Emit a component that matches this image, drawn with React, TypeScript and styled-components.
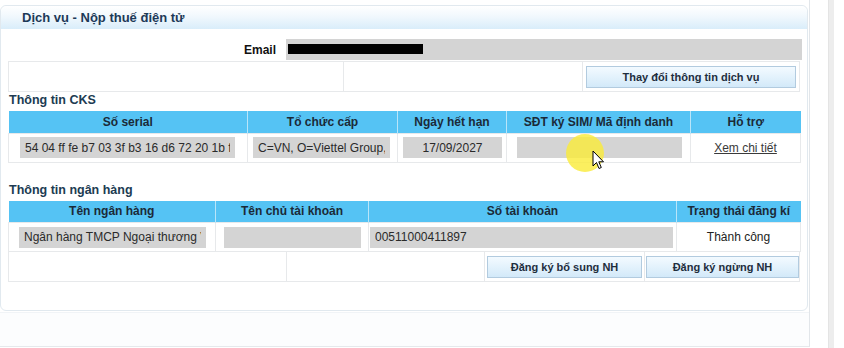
import React from 'react';
import styled, { createGlobalStyle } from 'styled-components';

const GlobalStyle = createGlobalStyle`
  html, body {
    margin: 0;
    padding: 0;
    background: #fff;
  }
  body {
    font-family: "Liberation Sans", Arial, sans-serif;
    color: #222;
  }
  * {
    box-sizing: border-box;
  }
`;

const Page = styled.div`
  display: flex;
  width: 844px;
  height: 348px;
  overflow: hidden;
  position: relative;
`;

const Main = styled.div`
  width: 810px;
  height: 347px;
  padding-top: 5px;
  border-right: 1px solid #e2e6ea;
  border-bottom: 1px solid #e6e9ec;
  display: flex;
  flex-direction: column;
`;

const Panel = styled.div`
  width: 808px;
  border: 1px solid #e1e9ef;
  border-radius: 6px;
  padding-bottom: 28px;
  background: #fff;
`;

const TitleBar = styled.div`
  height: 23px;
  padding-left: 21px;
  display: flex;
  align-items: center;
  border-radius: 6px 6px 0 0;
  background: linear-gradient(#ffffff 0%, #f1f8fd 45%, #d9edfa 100%);
  font-size: 13px;
  font-weight: bold;
  color: #1d3a58;
`;

const Content = styled.div`
  padding: 9px 7px 0 7px;
`;

const EmailRow = styled.div`
  display: flex;
  align-items: center;
  height: 23px;
  gap: 10px;
  margin-right: -2px;
`;

const FieldLabel = styled.div`
  width: 268px;
  text-align: right;
  font-size: 12px;
  font-weight: bold;
  color: #111;
`;

const GreyField = styled.input<{ $w?: number; $center?: boolean }>`
  display: block;
  width: ${(p) => (p.$w ? `${p.$w}px` : '100%')};
  height: 21px;
  padding: 0 5px;
  border: none;
  outline: none;
  background: #d4d4d4;
  font-family: "Liberation Sans", Arial, sans-serif;
  font-size: 12px;
  color: #2a2a2a;
  text-align: ${(p) => (p.$center ? 'center' : 'left')};
`;

const EmailField = styled.div`
  flex: 1;
  height: 21px;
  background: #d4d4d4;
  position: relative;
`;

const Redaction = styled.div`
  position: absolute;
  left: 2px;
  top: 5px;
  width: 135px;
  height: 10px;
  background: #000;
`;

const CellRow = styled.div<{ $cols: string; $h: number; $top?: boolean }>`
  display: grid;
  grid-template-columns: ${(p) => p.$cols};
  height: ${(p) => p.$h}px;
  border: 1px solid #e7e9eb;
  border-top: ${(p) => (p.$top ? '1px solid #e7e9eb' : 'none')};
`;

const Cell = styled.div<{ $pad?: string }>`
  border-left: 1px solid #e7e9eb;
  padding: ${(p) => p.$pad || '0'};
  display: flex;
  align-items: center;
  &:first-child {
    border-left: none;
  }
`;

const ActionButton = styled.button`
  width: 100%;
  height: 22px;
  border: 1px solid #b2cbdf;
  background: linear-gradient(#f3faff 0%, #e3f2fc 50%, #d3e9f9 100%);
  font-family: "Liberation Sans", Arial, sans-serif;
  font-size: 11px;
  font-weight: bold;
  color: #1e2e3e;
  padding: 0;
  cursor: pointer;
`;

const SectionTitle = styled.div<{ $top: number }>`
  margin-top: ${(p) => p.$top}px;
  height: 19px;
  padding-top: 1px;
  line-height: 15px;
  font-size: 12.5px;
  font-weight: bold;
  color: #203b52;
  padding-left: 1px;
`;

const DataTable = styled.table`
  width: 792px;
  border-collapse: collapse;
  table-layout: fixed;
`;

const HeadCell = styled.th`
  height: 22px;
  padding: 0;
  background: #55c3f4;
  border-left: 1px solid #b9e5f9;
  font-size: 12px;
  font-weight: bold;
  color: #1b2a38;
  text-align: center;
  &:first-child {
    border-left: none;
  }
`;

const BodyCell = styled.td<{ $pad?: string }>`
  height: 29px;
  padding: ${(p) => p.$pad || '0'};
  border: 1px solid #e7e9eb;
  font-size: 12px;
  text-align: center;
  vertical-align: middle;
`;

const LinkText = styled.a`
  color: #3a3a3a;
  text-decoration: underline;
  font-size: 12px;
`;

const StatusText = styled.span`
  font-size: 12px;
  color: #222;
`;

const BelowPanel = styled.div`
  flex: 1;
  margin-top: 1px;
  background: #fcfdfe;
  border-top: 1px solid #f1f4f7;
`;

const Gutter = styled.div`
  flex: 1;
  padding-left: 18px;
  display: flex;
`;

const ScrollStrip = styled.div`
  width: 6px;
  height: 100%;
  background: #ededed;
  border-left: 1px solid #e4e4e4;
`;

const Highlight = styled.div`
  position: absolute;
  left: 566px;
  top: 134px;
  width: 38px;
  height: 38px;
  border-radius: 50%;
  background: rgba(250, 236, 60, 0.82);
  pointer-events: none;
`;

const Pointer = styled.svg`
  position: absolute;
  left: 592px;
  top: 150px;
  pointer-events: none;
`;

const cksCols = [239, 150, 109, 184, 110];
const bankCols = [207, 153, 308, 124];

const App: React.FC = () => {
  return (
    <>
      <GlobalStyle />
      <Page>
        <Main>
          <Panel>
            <TitleBar>Dịch vụ - Nộp thuế điện tử</TitleBar>
            <Content>
              <EmailRow>
                <FieldLabel>Email</FieldLabel>
                <EmailField>
                  <Redaction />
                </EmailField>
              </EmailRow>

              <CellRow $cols="334px 239px 1fr" $h={31} $top>
                <Cell />
                <Cell />
                <Cell $pad="0 3px 0 3px">
                  <ActionButton>Thay đổi thông tin dịch vụ</ActionButton>
                </Cell>
              </CellRow>

              <SectionTitle $top={0}>Thông tin CKS</SectionTitle>
              <DataTable>
                <colgroup>
                  {cksCols.map((w, i) => (
                    <col key={i} style={{ width: w }} />
                  ))}
                </colgroup>
                <thead>
                  <tr>
                    <HeadCell>Số serial</HeadCell>
                    <HeadCell>Tổ chức cấp</HeadCell>
                    <HeadCell>Ngày hết hạn</HeadCell>
                    <HeadCell>SĐT ký SIM/ Mã định danh</HeadCell>
                    <HeadCell>Hỗ trợ</HeadCell>
                  </tr>
                </thead>
                <tbody>
                  <tr>
                    <BodyCell $pad="0 0 0 11px">
                      <GreyField $w={215} readOnly value="54 04 ff fe b7 03 3f b3 16 d6 72 20 1b f7 9a 0c" />
                    </BodyCell>
                    <BodyCell $pad="0 0 0 5px">
                      <GreyField $w={137} readOnly value="C=VN, O=Viettel Group, CN=Viettel-CA" />
                    </BodyCell>
                    <BodyCell $pad="0 0 0 5px">
                      <GreyField $w={99} $center readOnly value="17/09/2027" />
                    </BodyCell>
                    <BodyCell $pad="0 0 0 10px">
                      <GreyField $w={165} readOnly value="" />
                    </BodyCell>
                    <BodyCell>
                      <LinkText>Xem chi tiết</LinkText>
                    </BodyCell>
                  </tr>
                </tbody>
              </DataTable>

              <SectionTitle $top={19}>Thông tin ngân hàng</SectionTitle>
              <DataTable>
                <colgroup>
                  {bankCols.map((w, i) => (
                    <col key={i} style={{ width: w }} />
                  ))}
                </colgroup>
                <thead>
                  <tr>
                    <HeadCell>Tên ngân hàng</HeadCell>
                    <HeadCell>Tên chủ tài khoản</HeadCell>
                    <HeadCell>Số tài khoản</HeadCell>
                    <HeadCell>Trạng thái đăng kí</HeadCell>
                  </tr>
                </thead>
                <tbody>
                  <tr>
                    <BodyCell $pad="0 0 0 10px">
                      <GreyField $w={187} readOnly value="Ngân hàng TMCP Ngoại thương Việt Nam" />
                    </BodyCell>
                    <BodyCell $pad="0 0 0 8px">
                      <GreyField $w={137} readOnly value="" />
                    </BodyCell>
                    <BodyCell $pad="0 0 0 1px">
                      <GreyField $w={303} readOnly value="00511000411897" />
                    </BodyCell>
                    <BodyCell>
                      <StatusText>Thành công</StatusText>
                    </BodyCell>
                  </tr>
                </tbody>
              </DataTable>
              <CellRow $cols="277px 198px 160px 1fr" $h={30}>
                <Cell />
                <Cell />
                <Cell $pad="0 2px 0 2px">
                  <ActionButton>Đăng ký bổ sung NH</ActionButton>
                </Cell>
                <Cell $pad="0 0 0 1px">
                  <ActionButton>Đăng ký ngừng NH</ActionButton>
                </Cell>
              </CellRow>
            </Content>
          </Panel>
          <BelowPanel />
        </Main>
        <Gutter>
          <ScrollStrip />
        </Gutter>

        <Highlight />
        <Pointer width="13" height="20" viewBox="0 0 13 20">
          <path
            d="M1 1 L1 16 L4.5 12.5 L7 18.5 L9.3 17.5 L6.8 11.8 L11.5 11.8 Z"
            fill="#fff"
            stroke="#000"
            strokeWidth="1"
            strokeLinejoin="round"
          />
        </Pointer>
      </Page>
    </>
  );
};

export default App;
